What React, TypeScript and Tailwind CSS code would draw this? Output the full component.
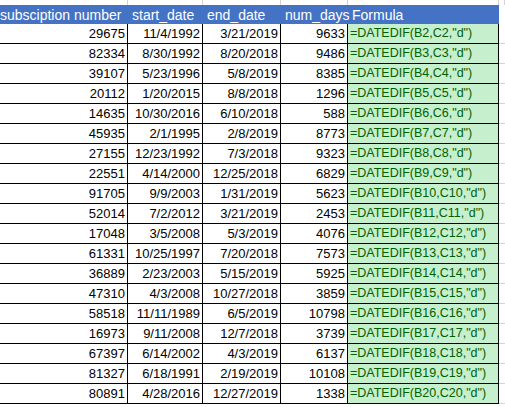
const rows: [number,string,string,number][] = [
[29675,"11/4/1992","3/21/2019",9633],
[82334,"8/30/1992","8/20/2018",9486],
[39107,"5/23/1996","5/8/2019",8385],
[20112,"1/20/2015","8/8/2018",1296],
[14635,"10/30/2016","6/10/2018",588],
[45935,"2/1/1995","2/8/2019",8773],
[27155,"12/23/1992","7/3/2018",9323],
[22551,"4/14/2000","12/25/2018",6829],
[91705,"9/9/2003","1/31/2019",5623],
[52014,"7/2/2012","3/21/2019",2453],
[17048,"3/5/2008","5/3/2019",4076],
[61331,"10/25/1997","7/20/2018",7573],
[36889,"2/23/2003","5/15/2019",5925],
[47310,"4/3/2008","10/27/2018",3859],
[58518,"11/11/1989","6/5/2019",10798],
[16973,"9/11/2008","12/7/2018",3739],
[67397,"6/14/2002","4/3/2019",6137],
[81327,"6/18/1991","2/19/2019",10108],
[80891,"4/28/2016","12/27/2019",1338],
];
const cols = "grid grid-cols-[128px_75px_78px_67px_151px_6px]";
export default function App(){
  return (
    <div className="w-[505px] h-[407px] bg-white overflow-hidden text-[13px] leading-none" style={{fontFamily:"'Liberation Sans',Arial,sans-serif"}}>
      <div className={cols+" h-[5px]"}>
        {[0,1,2,3,4,5].map(i=><div key={i} className="border-r border-[#d4d4d4]"/>)}
      </div>
      <div className={cols+" h-[19px]"}>
        <div className="col-span-5 bg-[#4472C4] text-white text-[14px] grid grid-cols-[128px_75px_78px_67px_151px] items-center">
          <div className="whitespace-nowrap">subsciption number</div>
          <div className="pl-1">start_date</div>
          <div className="pl-1">end_date</div>
          <div className="pl-1">num_days</div>
          <div className="pl-1">Formula</div>
        </div>
        <div/>
      </div>
      {rows.map((r,i)=>(
        <div key={i} className={cols+" h-[20px]"}>
          <div className="border-b border-r border-black flex items-center justify-end pr-[2px]">{r[0]}</div>
          <div className="border-b border-r border-black flex items-center justify-end pr-[2px]">{r[1]}</div>
          <div className="border-b border-r border-black flex items-center justify-end pr-[2px]">{r[2]}</div>
          <div className="border-b border-r border-black flex items-center justify-end pr-[2px]">{r[3]}</div>
          <div className="border-b border-r border-black bg-[#C6EFCE] text-[#006100] flex items-center pl-[2px] whitespace-nowrap overflow-hidden text-[12.5px]">{`=DATEDIF(B${i+2},C${i+2},"d")`}</div>
          <div className="border-b border-[#d4d4d4]"/>
        </div>
      ))}
    </div>
  );
}
